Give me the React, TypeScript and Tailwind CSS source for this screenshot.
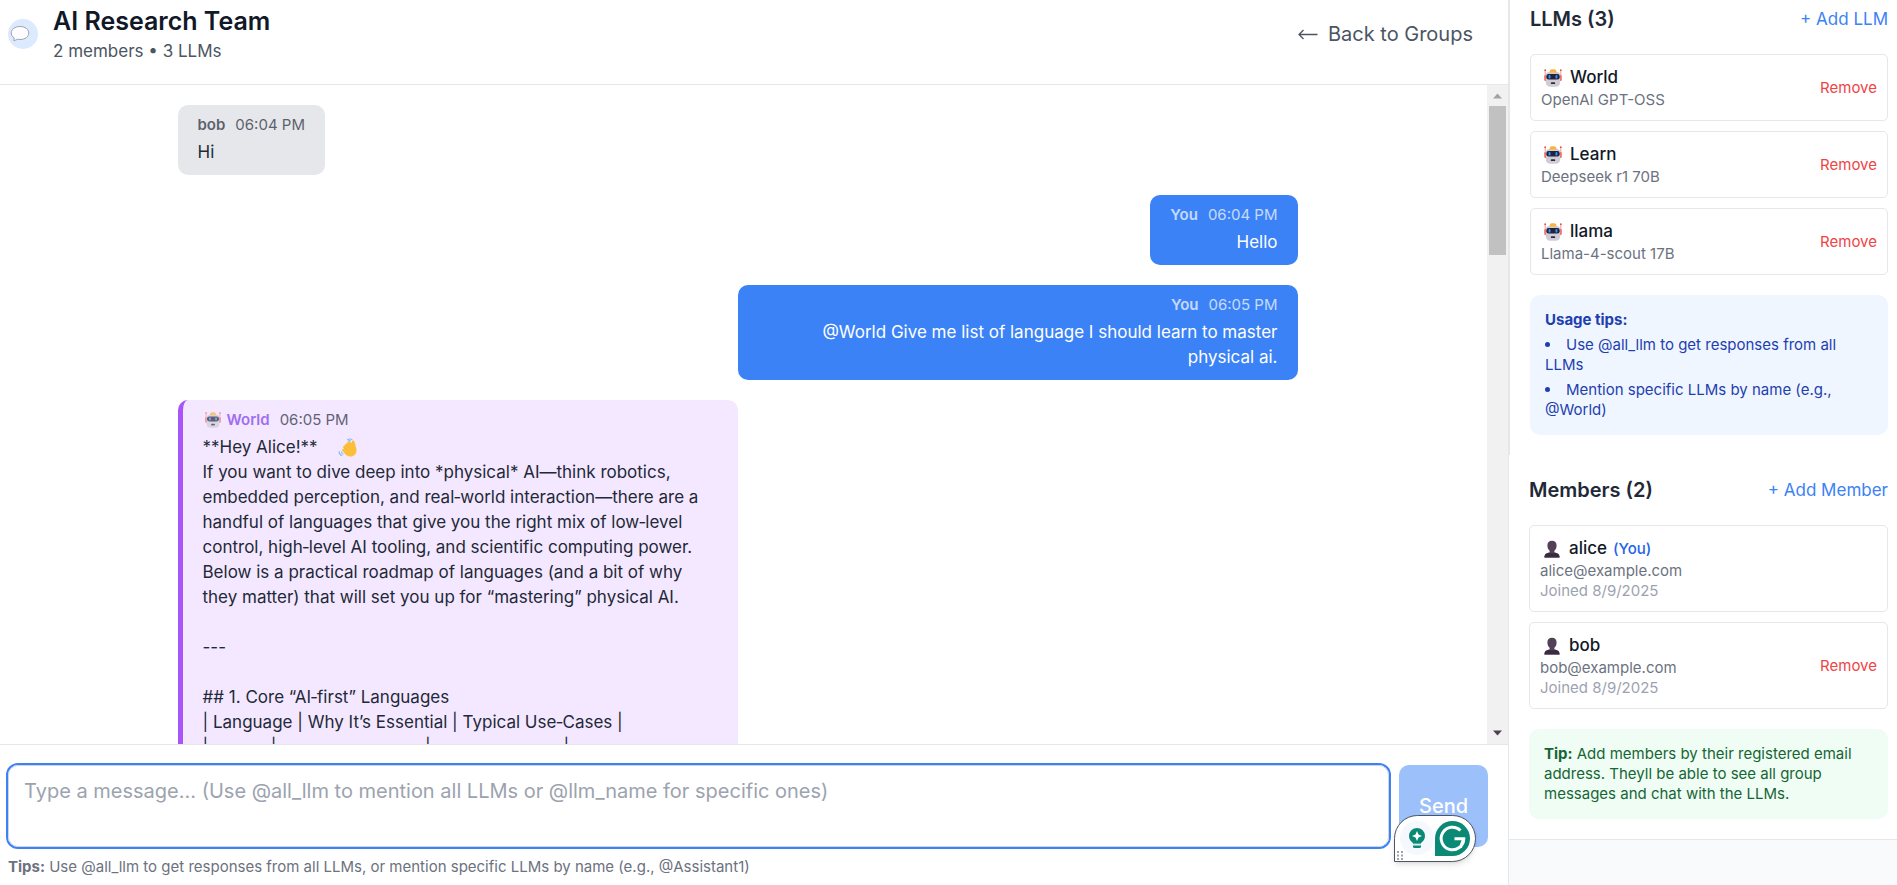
import React from "react";

interface Llm {
    name: string;
    model: string;
}

interface Member {
    name: string;
    email: string;
    joined: string;
    isYou?: boolean;
}

interface Message {
    id: number;
    sender: string;
    time: string;
    kind: "other" | "own" | "llm";
    text: string;
}

const llms: Llm[] = [
    { name: "World", model: "OpenAI GPT-OSS" },
    { name: "Learn", model: "Deepseek r1 70B" },
    { name: "llama", model: "Llama-4-scout 17B" },
];

const members: Member[] = [
    {
        name: "alice",
        email: "alice@example.com",
        joined: "8/9/2025",
        isYou: true,
    },
    { name: "bob", email: "bob@example.com", joined: "8/9/2025" },
];

const llmReply = `If you want to dive deep into *physical* AI—think robotics, embedded perception, and real‑world interaction—there are a handful of languages that give you the right mix of low‑level control, high‑level AI tooling, and scientific computing power. Below is a practical roadmap of languages (and a bit of why they matter) that will set you up for “mastering” physical AI.

---

## 1. Core “AI‑first” Languages
| Language | Why It’s Essential | Typical Use‑Cases |
|--------|-------------------|-----------------|`;

const messages: Message[] = [
    { id: 1, sender: "bob", time: "06:04 PM", kind: "other", text: "Hi" },
    { id: 2, sender: "You", time: "06:04 PM", kind: "own", text: "Hello" },
    {
        id: 3,
        sender: "You",
        time: "06:05 PM",
        kind: "own",
        text: "@World Give me list of language I should learn to master physical ai.",
    },
    { id: 4, sender: "World", time: "06:05 PM", kind: "llm", text: llmReply },
];

const RobotIcon: React.FC<{ className?: string }> = ({ className = "" }) => (
    <svg viewBox="0 0 18 18" className={className} aria-hidden="true">
        <path d="M1.2 1v8M16.8 1v8" stroke="#f59a94" strokeWidth="1" />
        <circle cx="1.2" cy="1.2" r="0.9" fill="#e8473f" />
        <circle cx="16.8" cy="1.2" r="0.9" fill="#e8473f" />
        <rect x="0.3" y="6" width="2.4" height="6" rx="1" fill="#f0605a" />
        <rect x="15.3" y="6" width="2.4" height="6" rx="1" fill="#f0605a" />
        <path
            d="M1.8 6.5Q1.8 3 5.5 3h7q3.7 0 3.7 3.500V13q0 4.800-4.800 4.800H6.600Q1.800 17.800 1.800 13z"
            fill="#cfccd6"
        />
        <path d="M5.500 3.600Q5.500.3 8 .3h2q2.500 0 2.500 3.300z" fill="#fbb43a" />
        <rect x="2.3" y="5" width="13.4" height="5.6" rx="2.4" fill="#26213a" />
        <rect x="4.6" y="6" width="1.9" height="3.6" rx="0.9" fill="#2d9bf5" />
        <rect x="11.5" y="6" width="1.9" height="3.6" rx="0.9" fill="#2d9bf5" />
        <rect x="6.8" y="13.3" width="4.4" height="1.8" rx="0.9" fill="#33283f" />
    </svg>
);

const PersonIcon: React.FC<{ className?: string }> = ({ className = "" }) => (
    <svg viewBox="0 0 18 18" className={className} aria-hidden="true">
        <path
            d="M9 .8c3 0 4.600 2 4.600 4.700 0 2.500-1 4.200-2.200 5.200v1.700l3 1.100c1.400.6 2 1.600 2.200 4H1.400c.2-2.400.8-3.400 2.200-4l3-1.100v-1.700C5.400 9.700 4.400 8 4.400 5.500 4.400 2.800 6 .8 9 .8z"
            fill="#533f57"
        />
        <path
            d="M3.600 13.500 6 12.600q3 1.800 6 0l2.400.9c1.400.6 2 1.600 2.200 4H1.400c.2-2.400.8-3.400 2.200-4z"
            fill="#3a2c40"
        />
    </svg>
);

const WaveIcon: React.FC<{ className?: string }> = ({ className = "" }) => (
    <svg viewBox="0 0 20 20" className={className} aria-hidden="true">
        <path
            d="M6.300 7.500 9.800 4q1.200-1.200 2.300-.3l1.700 1.500V3.600q.2-1.300 1.400-1.100 1.200.2 1.500 1.700l1.600 6.300q1 5-2.700 7.200-4.600 2.200-8.100-1.200l-3.300-3.800q-.6-1.400.7-1.700l1-.2-.8-1.300q-.2-1.300 1.200-2z"
            fill="#fdbf3a"
        />
        <path
            d="m6.800 9.500 2 2M8.800 7.500l2.300 2.300"
            stroke="#eda036"
            strokeWidth="0.6"
            fill="none"
        />
        <path
            d="M9.500 1.800q2.500-1.600 4.500-.2M1.200 13.500q-.2 3 2.600 4M3.500 14q0 1.500 1.500 2M10.500 3q1.200-.6 2-.1"
            stroke="#7fc0f3"
            strokeWidth="1.1"
            fill="none"
            strokeLinecap="round"
        />
    </svg>
);

const SpeechIcon: React.FC<{ className?: string }> = ({ className = "" }) => (
    <svg viewBox="0 0 20 18" className={className} aria-hidden="true">
        <path
            d="M10 1.500c5 0 8.800 2.800 8.800 6.500s-3.800 6.500-8.800 6.500q-1.200 0-2.400-.3l-3.600 1.600.1-2.900Q1.200 11 1.200 8c0-3.700 3.800-6.500 8.800-6.500z"
            fill="#fdfdff"
            stroke="#9a96a3"
            strokeWidth="0.9"
        />
    </svg>
);

const BackArrow: React.FC<{ className?: string }> = ({ className = "" }) => (
    <svg viewBox="0 0 20 12" className={className} aria-hidden="true">
        <path
            d="M1 6.500h18.500M5.500 2 1 6.500 5.500 11"
            fill="none"
            stroke="currentColor"
            strokeWidth="1.3"
        />
    </svg>
);

const bubbleStyles = {
    other: "bg-[#e5e7eb] text-[#1f2937]",
    own: "bg-[#3b82f6] text-white text-right",
    llm: "bg-[#f3e8ff] text-[#1f2937] border-l-[5px] border-[#a855f7]",
};

const senderStyles = {
    other: "",
    own: "",
    llm: "text-[#7c3aed]",
};

const MessageBubble: React.FC<{ message: Message }> = ({ message }) => {
    const { kind, sender, time, text } = message;

    return (
        <div
            className={`flex ${kind === "own" ? "justify-end" : "justify-start"}`}
        >
            <div
                className={`max-w-[50%] rounded-[10px] px-5 py-2.5 ${bubbleStyles[kind]}`}
            >
                <div
                    className={`mb-[5px] flex items-center gap-2.5 text-[15px] leading-5 opacity-70 ${
                        kind === "own" ? "justify-end" : ""
                    }`}
                >
                    <span
                        className={`flex items-center gap-1.5 font-semibold ${senderStyles[kind]}`}
                    >
                        {kind === "llm" && (
                            <RobotIcon className="ml-0.5 h-4 w-4" />
                        )}
                        {sender}
                    </span>
                    <span>{time}</span>
                </div>
                <div className="whitespace-pre-wrap break-words text-[17px] leading-[25px]">
                    {kind === "llm" && (
                        <p className="flex items-center gap-4">
                            **Hey Alice!** <WaveIcon className="h-5 w-5" />
                        </p>
                    )}
                    {text}
                </div>
            </div>
        </div>
    );
};

const Scrollbar = () => (
    <div
        className="flex w-[21px] shrink-0 flex-col items-center bg-[#f1f1f1]"
        aria-hidden="true"
    >
        <svg viewBox="0 0 21 21" className="h-[21px] w-[21px] shrink-0">
            <path d="M10.500 8.500 15 13.500H6z" fill="#a3a3a3" />
        </svg>
        <div className="h-[149px] w-[17px] bg-[#c1c1c1]" />
        <div className="flex-1" />
        <svg viewBox="0 0 21 21" className="h-[21px] w-[21px] shrink-0">
            <path d="M10.500 12.500 15 7.500H6z" fill="#4d4151" />
        </svg>
    </div>
);

// Floating writing assistant, sits over the corner of the send button
const WritingAssistant = () => (
    <div
        className="absolute top-[50px] right-3 flex h-[47px] w-[82px] items-center rounded-r-full rounded-tl-full border border-[#4b5563] bg-white shadow-md"
        aria-hidden="true"
    >
        <svg viewBox="0 0 80 45" className="h-[45px] w-20">
            <circle cx="22" cy="22" r="17" fill="#f5f8fc" />
            <path
                d="M22 12a8 8 0 0 1 8 8c0 3-1.500 5-4 7v1.500h-8V27c-2.500-2-4-4-4-7a8 8 0 0 1 8-8z"
                fill="#0a8a76"
            />
            <path
                d="m22 15 1.500 3.500L27 20l-3.500 1.500L22 25l-1.500-3.500L17 20l3.500-1.500z"
                fill="#fff"
            />
            <path
                d="M18 29.500h8v1q0 1.500-1.500 1.500h-5q-1.500 0-1.500-1.500z"
                fill="#0a8a76"
            />
            <path d="M17.500 28.200h9" stroke="#fff" strokeWidth="1" />
            <path
                d="M40 22.500a17.500 17.500 0 1 1 17.500 17.500H40z"
                fill="#0a8a76"
            />
            <path
                d="M65.500 14.500a11.300 11.300 0 1 0 3.300 8.200H59.500M68.800 22.500l-3.400 9"
                fill="none"
                stroke="#fff"
                strokeWidth="3"
            />
            <path
                d="M2 35h2v2H2zM6 35h2v2H6zM2 38.500h2v2H2zM6 38.500h2v2H6zM2 42h2v2H2zM6 42h2v2H6z"
                fill="#9ca3af"
            />
        </svg>
    </div>
);

const RemoveButton = () => (
    <button
        type="button"
        className="text-[15px] leading-5 text-[#ef4444] hover:text-red-700"
    >
        Remove
    </button>
);

export default function App() {
    return (
        <div className="flex h-screen overflow-hidden bg-white font-['Inter',sans-serif] text-[#111827]">
            {/* Chat column */}
            <main className="flex min-w-0 flex-1 flex-col">
                <header className="flex items-center justify-between border-b border-[#e5e7eb] pt-1 pr-[35px] pb-5 pl-2">
                    <div className="flex items-center gap-[15px]">
                        <div className="flex h-[30px] w-[30px] items-center rounded-full bg-[#dbeafe] pl-0.5">
                            <SpeechIcon className="h-[18px] w-5" />
                        </div>
                        <div>
                            <h1 className="text-[25px] leading-[35px] font-semibold">
                                AI Research Team
                            </h1>
                            <p className="text-[17px] leading-[25px] text-[#4b5563]">
                                2 members • 3 LLMs
                            </p>
                        </div>
                    </div>
                    <a
                        href="#groups"
                        className="flex items-center gap-2.5 text-xl leading-[30px] text-[#4b5563] hover:text-gray-800"
                    >
                        <BackArrow className="h-3 w-5" />
                        Back to Groups
                    </a>
                </header>

                {/* Messages */}
                <div className="flex min-h-0 flex-1">
                    <div className="flex-1 overflow-hidden pt-5 pr-3">
                        <div className="mx-auto max-w-[1120px] space-y-5">
                            {messages.map((message) => (
                                <MessageBubble
                                    key={message.id}
                                    message={message}
                                />
                            ))}
                        </div>
                    </div>
                    <Scrollbar />
                </div>

                {/* Composer */}
                <footer className="border-t border-[#e5e7eb] pt-5 pr-5 pb-2 pl-2">
                    <form className="relative flex gap-2.5">
                        <textarea
                            aria-label="Message"
                            placeholder="Type a message... (Use @all_llm to mention all LLMs or @llm_name for specific ones)"
                            className="block h-[82px] min-w-0 flex-1 resize-none rounded-[10px] border border-[#d1d5db] px-[15px] py-2.5 text-xl leading-[30px] placeholder-[#9ca3af] ring-2 ring-[#3b82f6] outline-none"
                        />
                        <button
                            type="submit"
                            className="w-[89px] rounded-[10px] bg-[#3b82f6] text-xl font-medium text-white opacity-50"
                        >
                            Send
                        </button>
                        <WritingAssistant />
                    </form>
                    <p className="mt-2.5 text-[15px] leading-5 text-[#6b7280]">
                        <strong className="font-bold">Tips:</strong> Use
                        @all_llm to get responses from all LLMs, or mention
                        specific LLMs by name (e.g., @Assistant1)
                    </p>
                </footer>
            </main>

            {/* Sidebar */}
            <aside className="w-[389px] shrink-0 border-l border-[#e5e7eb] bg-[#f9fafb]">
                <section className="border-l border-[#e5e7eb] bg-white pt-1 pr-[9px] pb-5 pl-5">
                    <div className="mb-5 flex items-center justify-between">
                        <h2 className="text-xl leading-[30px] font-semibold text-[#1f2937]">
                            LLMs ({llms.length})
                        </h2>
                        <button
                            type="button"
                            className="text-[17px] leading-[25px] text-[#3b82f6]"
                        >
                            + Add LLM
                        </button>
                    </div>
                    <div className="space-y-2.5">
                        {llms.map((llm) => (
                            <div
                                key={llm.name}
                                className="flex items-center justify-between rounded-[5px] border border-[#e5e7eb] p-2.5"
                            >
                                <div>
                                    <div className="flex items-center gap-2 text-[17px] leading-[25px] font-medium">
                                        <RobotIcon className="ml-[3px] h-[18px] w-[18px]" />
                                        {llm.name}
                                    </div>
                                    <div className="text-[15px] leading-5 text-[#6b7280]">
                                        {llm.model}
                                    </div>
                                </div>
                                <RemoveButton />
                            </div>
                        ))}
                    </div>
                    <div className="mt-5 rounded-[10px] bg-[#eff6ff] p-[15px] text-[15px] leading-5 text-[#1e40af]">
                        <strong className="font-bold">Usage tips:</strong>
                        <ul className="mt-[5px] list-inside list-disc space-y-[5px]">
                            <li>Use @all_llm to get responses from all LLMs</li>
                            <li>
                                Mention specific LLMs by name (e.g., @World)
                            </li>
                        </ul>
                    </div>
                </section>

                <section className="border-b border-[#e5e7eb] bg-white pt-5 pr-[9px] pb-5 pl-5">
                    <div className="mb-5 flex items-center justify-between">
                        <h2 className="text-xl leading-[30px] font-semibold text-[#1f2937]">
                            Members ({members.length})
                        </h2>
                        <button
                            type="button"
                            className="text-[17px] leading-[25px] text-[#3b82f6]"
                        >
                            + Add Member
                        </button>
                    </div>
                    <div className="space-y-2.5">
                        {members.map((member) => (
                            <div
                                key={member.email}
                                className="flex items-center justify-between rounded-[5px] border border-[#e5e7eb] p-2.5"
                            >
                                <div>
                                    <div className="flex items-center text-[17px] leading-[25px] font-medium">
                                        <PersonIcon className="mr-2 ml-[3px] h-[18px] w-[18px]" />
                                        {member.name}
                                        {member.isYou && (
                                            <span className="ml-1.5 text-[15px] text-[#2563eb]">
                                                (You)
                                            </span>
                                        )}
                                    </div>
                                    <div className="text-[15px] leading-5 text-[#6b7280]">
                                        {member.email}
                                    </div>
                                    <div className="text-[15px] leading-5 text-[#9ca3af]">
                                        Joined {member.joined}
                                    </div>
                                </div>
                                {!member.isYou && <RemoveButton />}
                            </div>
                        ))}
                    </div>
                    <p className="mt-5 rounded-[10px] bg-[#f0fdf4] p-[15px] text-[15px] leading-5 text-[#166534]">
                        <strong className="font-bold">Tip:</strong> Add members
                        by their registered email address. Theyll be able to
                        see all group messages and chat with the LLMs.
                    </p>
                </section>
            </aside>
        </div>
    );
}
